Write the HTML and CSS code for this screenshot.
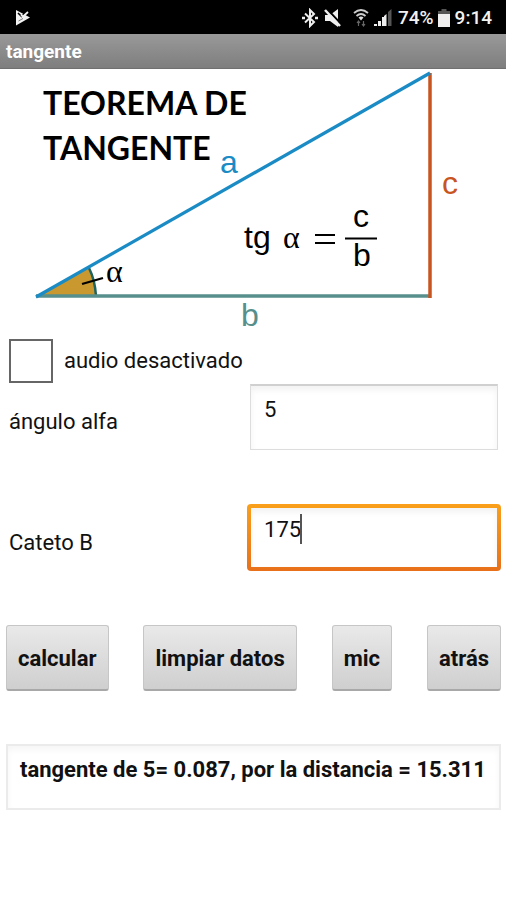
FILE: index.html
```html
<!DOCTYPE html>
<html lang="es">
<head>
<meta charset="utf-8">
<meta name="viewport" content="width=device-width, initial-scale=1">
<title>tangente</title>
<link rel="stylesheet" href="styles.css">
</head>
<body>
<div class="status">
  <svg class="status-app" viewBox="0 0 16 18" width="16" height="18" aria-hidden="true">
    <path d="M1 1L15 8.500L1 16.500Z" fill="#f2f2f2"/>
    <path d="M3 4L6.500 7.500L12 2" fill="none" stroke="#000" stroke-width="1.500"/>
    <path d="M6 6L8 7.500L13 3" fill="none" stroke="#f2f2f2" stroke-width="1.800"/>
    <path d="M3.500 12L8 9.500" fill="none" stroke="#777" stroke-width="1"/>
  </svg>
  <div class="status-right">
    <svg viewBox="0 0 18 20" width="18" height="20" aria-hidden="true">
      <path d="M4 5.500L13 14L9 18V2L13 6L4 14.500" fill="none" stroke="#eee" stroke-width="2"/>
      <path d="M1 10H4M14 10H17" stroke="#eee" stroke-width="2.500"/>
    </svg>
    <svg class="mute" viewBox="0 0 18 20" width="18" height="20" aria-hidden="true">
      <path d="M1 7H6L14 1V19L6 13H1Z" fill="#eee"/>
      <path d="M3 1L18 17" stroke="#000" stroke-width="2"/>
      <path d="M1 2L16 18" stroke="#eee" stroke-width="2.500"/>
    </svg>
    <svg class="wifi" viewBox="0 0 16 20" width="16" height="20" aria-hidden="true">
      <path d="M1 5Q8 -1 15 5M3.500 8Q8 4 12.500 8" fill="none" stroke="#ccc" stroke-width="1.800"/>
      <path d="M5.500 9.500Q8 7.500 10.500 9.500L8 12.500Z" fill="#ddd"/>
      <path d="M5.500 13V18M10.500 13V18M4 15L5.500 13L7 15M9 16L10.500 18L12 16" fill="none" stroke="#666" stroke-width="1.200"/>
    </svg>
    <svg viewBox="0 0 18 20" width="18" height="20" aria-hidden="true">
      <path d="M0 18V16H3V18ZM4 18V13H7V18ZM8 18V9H12V18Z" fill="#eee"/>
      <path d="M10 18V8L12.500 6V18Z" fill="#eee"/>
      <path d="M14 18V4L17.500 1V18Z" fill="#555"/>
    </svg>
    <span class="percent">74%</span>
    <svg class="battery" viewBox="0 0 12 18" width="12" height="18" aria-hidden="true">
      <path d="M3.500 0H8.500V2H12V5H0V2H3.500Z" fill="#555"/>
      <path d="M0 5H12V18H0Z" fill="#eee"/>
    </svg>
    <span>9:14</span>
  </div>
</div>
<header class="titlebar"><h1>tangente</h1></header>
<main>
  <svg class="figure" viewBox="0 0 506 269" role="img" aria-label="Teorema de tangente">
    <path d="M38 227L89 199Q96 212 96 227Z" fill="#c9982f"/>
    <path d="M89 199Q95 211 96 227" fill="none" stroke="#1d6360" stroke-width="2.500"/>
    <path d="M36 227H429" stroke="#568f8b" stroke-width="3.500"/>
    <path d="M430 4V229" stroke="#c8551f" stroke-width="3.500"/>
    <path d="M36 228L430 4" stroke="#1a8bc4" stroke-width="3.200"/>
    <path d="M82 215L103 209" stroke="#000" stroke-width="2.200"/>
    <text class="heading" x="43" y="46">TEOREMA DE</text>
    <text class="heading" x="43" y="91">TANGENTE</text>
    <text class="math side-a" x="220" y="104">a</text>
    <text class="math side-c" x="442" y="125">c</text>
    <text class="math side-b" x="241" y="257">b</text>
    <text class="greek" x="106" y="213">α</text>
    <text class="math" x="244" y="179">tg</text>
    <text class="greek" x="283" y="179">α</text>
    <path d="M315 166H335M315 174H335M345 169.500H377" stroke="#000" stroke-width="2.200"/>
    <text class="math" x="353" y="158">c</text>
    <text class="math" x="353" y="197">b</text>
  </svg>
  <form class="form">
    <div class="audio">
      <input type="checkbox" id="audio">
      <label for="audio">audio desactivado</label>
    </div>
    <div class="field">
      <label for="alfa">ángulo alfa</label>
      <div class="box"><input type="text" id="alfa" value="5"></div>
    </div>
    <div class="field">
      <label for="cateto">Cateto B</label>
      <div class="box active"><input type="text" id="cateto" value="175"><span class="caret"></span></div>
    </div>
    <div class="actions">
      <button type="button">calcular</button>
      <button type="button">limpiar datos</button>
      <button type="button">mic</button>
      <button type="button">atrás</button>
    </div>
    <output class="result" for="alfa cateto">tangente de 5= 0.087, por la distancia = 15.311</output>
  </form>
</main>
</body>
</html>
```
FILE: styles.css
```css
* { box-sizing: border-box; }

body {
  margin: 0;
  background: #fff;
  color: #111;
  font-family: Roboto, "Liberation Sans", sans-serif;
  font-size: 22px;
  line-height: 26px;
}

.status {
  display: flex;
  align-items: center;
  justify-content: space-between;
  height: 34px;
  padding: 2px 14px 0 15px;
  background: #000;
  color: #f2f2f2;
  font-size: 19px;
  font-weight: 500;
}

.status-right { display: flex; align-items: center; }
.mute { margin-left: 5px; }
.wifi { margin: 0 5px 0 11px; }
.percent { margin-left: 6px; }
.battery { margin: 0 5px 0 4px; }

.titlebar {
  height: 35px;
  padding: 5px 6px;
  background: linear-gradient(#999, #7e7e7e);
  border-bottom: 1px solid #707070;
}

.titlebar h1 {
  margin: 0;
  color: #fff;
  font-size: 19px;
  font-weight: 700;
  line-height: 26px;
}

.figure { display: block; width: 100%; }
.heading { font: 700 32px Lato, sans-serif; }
.math { font: 32px "Liberation Sans", sans-serif; }
.greek { font: 32px "Liberation Serif", serif; }
.side-a { fill: #1a8bc4; }
.side-b { fill: #568f8b; }
.side-c { fill: #c8551f; }

.form { padding: 0 5px 0 6px; }

.audio {
  display: flex;
  align-items: center;
  gap: 11px;
  height: 46px;
  padding-left: 3px;
}

.audio input {
  appearance: none;
  width: 44px;
  height: 44px;
  margin: 0;
  border: 2px solid #666;
  background: #fff;
}

.field {
  display: grid;
  grid-template-columns: 49fr 51fr;
  align-items: center;
  padding-left: 3px;
  margin-bottom: 54px;
}

.field label { padding-top: 10px; }

.box { position: relative; padding: 0 3px 0 0; }

.box input {
  display: block;
  width: 100%;
  height: 66px;
  margin: 0;
  padding: 0 13px 16px;
  border: 1px solid #ddd;
  border-top: 2px solid #d0d0d0;
  background: #fff;
  box-shadow: inset 0 4px 6px #f2f2f2;
  color: #111;
  font: inherit;
  outline: none;
}

.box.active {
  margin-left: -3px;
  padding: 4px;
  border-radius: 4px;
  background: linear-gradient(#f9a01b, #e8701a);
}

.box.active input {
  height: 59px;
  padding: 0 13px 16px;
  border: 0;
}

.caret {
  position: absolute;
  top: 10px;
  left: 53px;
  width: 2px;
  height: 30px;
  background: #555;
}

.actions {
  display: flex;
  justify-content: space-between;
}

.actions button {
  height: 66px;
  padding: 3px 11px 0;
  border: 1px solid #c6c6c6;
  border-bottom: 2px solid #a8a8a8;
  border-radius: 3px;
  background: linear-gradient(#e9e9e9, #cfcfcf);
  color: #111;
  font: inherit;
  font-weight: 700;
}

.result {
  display: block;
  min-height: 66px;
  margin-top: 53px;
  padding: 11px 12px;
  border: 2px solid #ebebeb;
  box-shadow: inset 0 4px 6px #f6f6f6;
  font-weight: 700;
}
```
